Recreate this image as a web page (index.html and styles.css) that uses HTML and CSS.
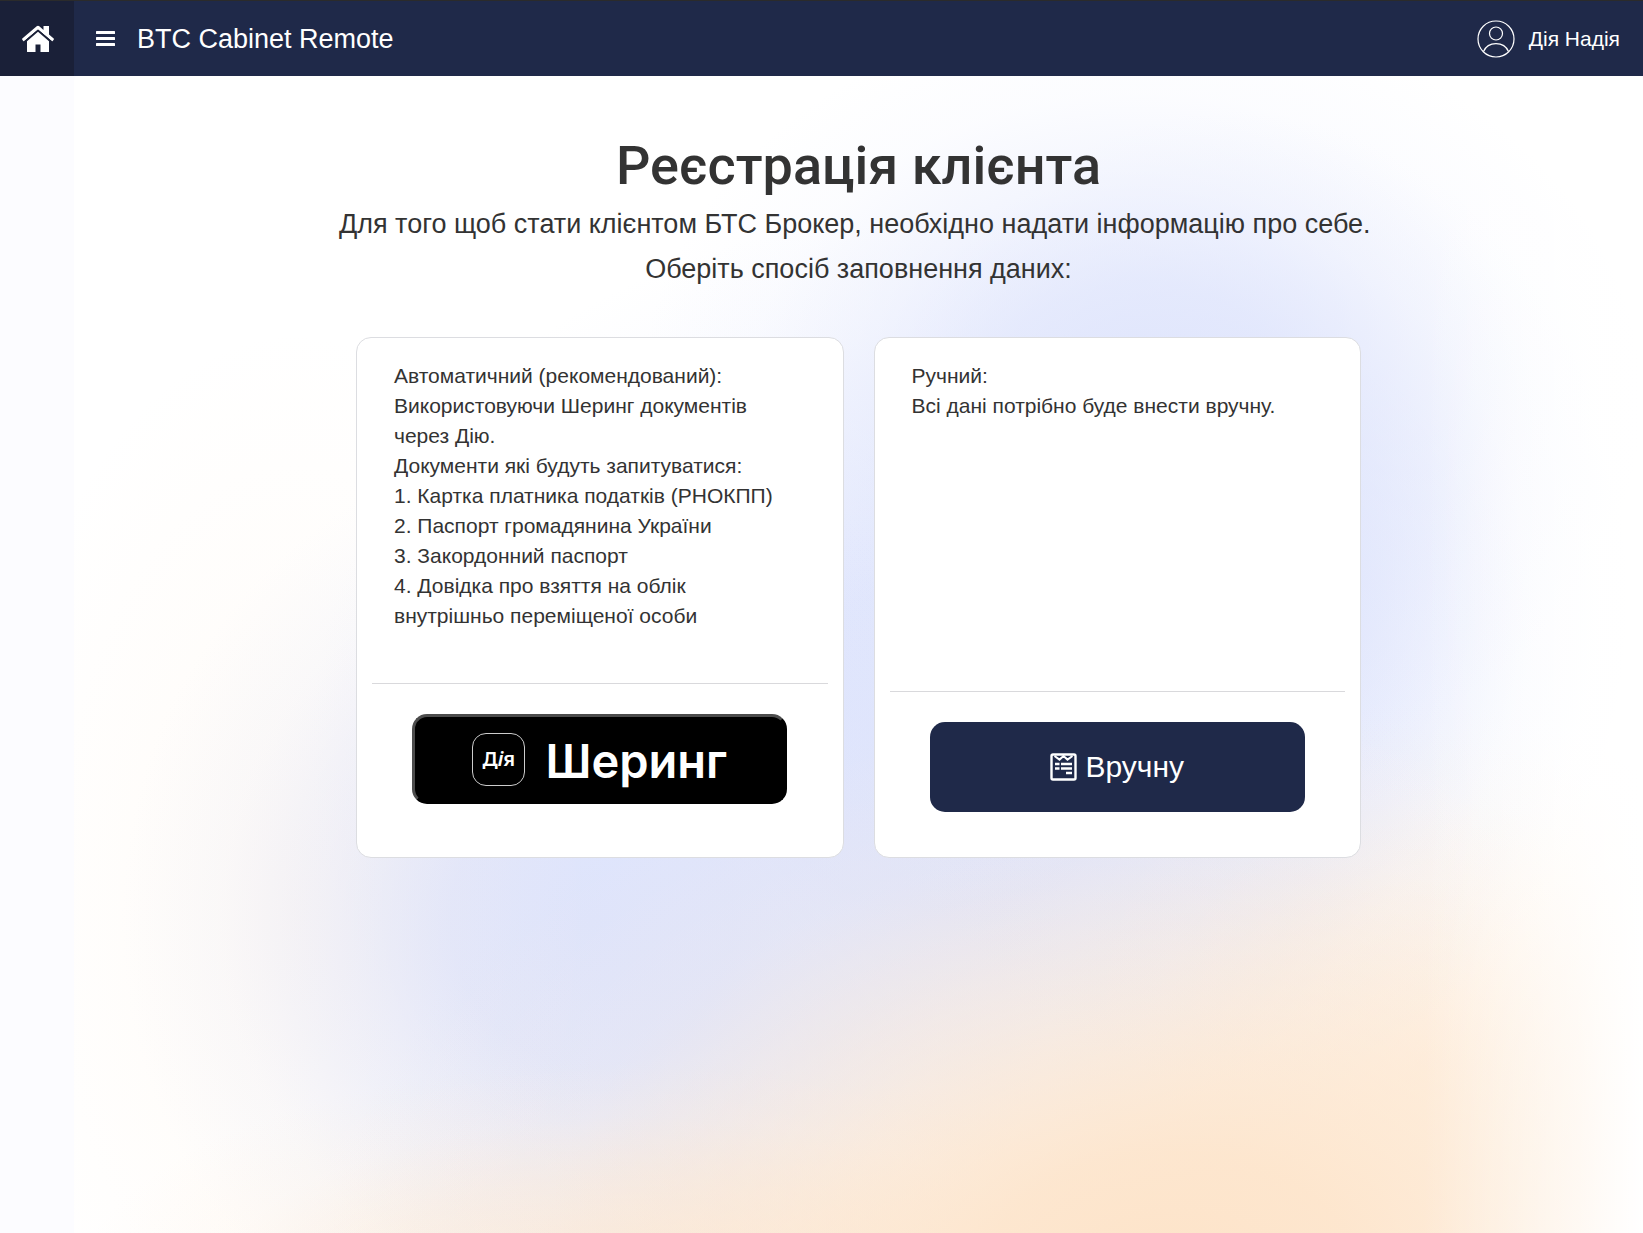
FILE: index.html
```html
<!DOCTYPE html>
<html lang="uk">
<head>
<meta charset="utf-8">
<meta name="viewport" content="width=device-width, initial-scale=1">
<title>BTC Cabinet Remote</title>
<link rel="stylesheet" href="styles.css">
</head>
<body>
<header class="topbar">
  <a class="home" href="#" aria-label="Home">
    <svg width="34" height="28" viewBox="0 0 34 28" fill="#fff"><path d="M17 6.800 L28 16.200 V26.500 Q28 27 27.500 27 H19.500 V19.500 H14.500 V27 H6.500 Q6 27 6 26.500 V16.200 Z"/><path d="M15.700 1.300 Q17 .300 18.300 1.300 L22.500 4.900 V1 H28 V9.600 L32.700 13.600 Q33.200 14.100 32.700 14.700 L31.700 15.900 Q31.200 16.400 30.700 16 L17 4.400 L3.300 16 Q2.800 16.400 2.300 15.900 L1.300 14.700 Q.800 14.100 1.300 13.600 Z"/><path d="M2.800 16.900 L17 5 L31.200 16.900" fill="none" stroke="#1a2038" stroke-width="1"/></svg>
  </a>
  <button class="menu" type="button" aria-label="Menu">
    <svg width="19" height="16" viewBox="0 0 19 16" fill="#fff"><rect width="19" height="3" rx=".5"/><rect y="6" width="19" height="3" rx=".5"/><rect y="12" width="19" height="3" rx=".5"/></svg>
  </button>
  <span class="brand">BTC Cabinet Remote</span>
  <a class="user" href="#">
    <svg width="38" height="38" viewBox="0 0 38 38" fill="none" stroke="#fff" stroke-width="1.200"><circle cx="19" cy="19" r="18"/><circle cx="19" cy="13.500" r="6.500"/><path d="M6.500 31.500 C11 21 27 21 31.500 31.500"/></svg>
    <span>Дія Надія</span>
  </a>
</header>
<div class="shell">
  <nav class="sidebar" aria-label="Sections"></nav>
  <main class="content">
    <h1 class="title">Реєстрація клієнта</h1>
    <p class="lead">Для того щоб стати клієнтом БТС Брокер, необхідно надати інформацію про себе.&nbsp;</p>
    <p class="lead">Оберіть спосіб заповнення даних:</p>
    <div class="cards">
      <section class="card">
        <div class="info">
          <p>Автоматичний (рекомендований):</p>
          <p>Використовуючи Шеринг документів через Дію.</p>
          <p>Документи які будуть запитуватися:</p>
          <p>1. Картка платника податків (РНОКПП)</p>
          <p>2. Паспорт громадянина України</p>
          <p>3. Закордонний паспорт</p>
          <p>4. Довідка про взяття на облік внутрішньо переміщеної особи</p>
        </div>
        <div class="action">
          <button class="btn btn-diia" type="button">
            <span class="diia-mark"><span>Д<i>і</i>я</span></span>
            <span class="diia-name">Шеринг</span>
          </button>
        </div>
      </section>
      <section class="card">
        <div class="info info-tall">
          <p>Ручний:</p>
          <p>Всі дані потрібно буде внести вручну.</p>
        </div>
        <div class="action">
          <button class="btn btn-manual" type="button">
            <svg width="27" height="28" viewBox="0 0 27 28" fill="none" stroke="#fff" stroke-width="2"><rect x="1.500" y="1.500" width="24" height="25" rx="1.500" stroke-width="2.400"/><path d="M4.500 3 L9.500 6.600 L13.500 3 L17.500 6.600 L22.500 3"/><path d="M5 11 H9.500 M11 11 H22 M5 15.500 H9.500 M11 15.500 H22 M16 20 H22" stroke-width="2.400"/></svg>
            <span>Вручну</span>
          </button>
        </div>
      </section>
    </div>
  </main>
</div>
</body>
</html>
```
FILE: styles.css
```css
* { box-sizing: border-box; }

body {
  margin: 0;
  min-height: 100vh;
  display: flex;
  flex-direction: column;
  font-family: "Liberation Sans", Arial, sans-serif;
  font-size: 21px;
  line-height: 30px;
  color: #333;
  background: #fcfcff;
}

h1, p { margin: 0; }

button { font: inherit; cursor: pointer; }

.topbar {
  display: flex;
  align-items: center;
  height: 76px;
  border-top: 1px solid #2b2b2b;
  background: #1f2949;
  color: #fff;
}

.home {
  display: flex;
  align-items: center;
  justify-content: center;
  align-self: stretch;
  width: 74px;
  padding-left: 2px;
  background: #1a2038;
}

.menu {
  display: flex;
  margin-left: 22px;
  padding: 0;
  border: 0;
  background: none;
}

.brand {
  margin-left: 22px;
  font-size: 27px;
}

.user {
  display: flex;
  align-items: center;
  gap: 14px;
  margin-left: auto;
  padding-right: 23px;
  color: #fff;
  text-decoration: none;
}

.shell {
  flex: 1;
  display: flex;
}

.sidebar { width: 74px; }

.content {
  --blue: 222, 228, 252;
  --peach: 253, 227, 200;
  flex: 1;
  padding: 55px 15px;
  border-radius: 4px 4px 0 0;
  text-align: center;
  background:
    linear-gradient(to left, #fff 0%, rgba(255, 255, 255, .6) 4%, rgba(255, 255, 255, 0) 14%),
    radial-gradient(ellipse 54% 50% at 70% 104%, rgba(var(--peach), 1) 0%, rgba(var(--peach), .86) 22%, rgba(var(--peach), .46) 48%, rgba(var(--peach), .12) 75%, rgba(var(--peach), 0) 100%),
    radial-gradient(ellipse 24% 32% at 86% 86%, rgba(var(--peach), .4) 0%, rgba(var(--peach), .2) 50%, rgba(var(--peach), .05) 75%, rgba(var(--peach), 0) 100%),
    radial-gradient(ellipse 36% 20% at 36% 105%, rgba(var(--peach), .7) 0%, rgba(var(--peach), .35) 50%, rgba(var(--peach), .1) 75%, rgba(var(--peach), 0) 100%),
    radial-gradient(ellipse 20% 50% at 14% 72%, rgba(var(--peach), .16) 0%, rgba(var(--peach), .08) 50%, rgba(var(--peach), 0) 100%),
    radial-gradient(ellipse 30% 42% at 33% 73%, rgba(var(--blue), 1) 0%, rgba(var(--blue), .88) 30%, rgba(var(--blue), .5) 55%, rgba(var(--blue), .16) 78%, rgba(var(--blue), 0) 100%),
    radial-gradient(ellipse 32% 34% at 68% 28%, rgba(var(--blue), .9) 0%, rgba(var(--blue), .72) 30%, rgba(var(--blue), .36) 55%, rgba(var(--blue), .1) 78%, rgba(var(--blue), 0) 100%),
    radial-gradient(ellipse 25% 42% at 74% 45%, rgba(var(--blue), 1) 0%, rgba(var(--blue), .86) 25%, rgba(var(--blue), .48) 50%, rgba(var(--blue), .14) 75%, rgba(var(--blue), 0) 100%),
    radial-gradient(ellipse 40% 46% at 55% 58%, rgba(var(--blue), 1) 0%, rgba(var(--blue), .9) 30%, rgba(var(--blue), .5) 55%, rgba(var(--blue), .14) 78%, rgba(var(--blue), 0) 100%),
    #fff;
}

.title {
  font: 500 54px/70px Roboto, sans-serif;
}

.lead {
  font-size: 27px;
  line-height: 45px;
}

.title + .lead { margin-top: 1px; }

.cards {
  display: grid;
  grid-template-columns: 1fr 1fr;
  gap: 30px;
  max-width: 1005px;
  margin: 45px auto 0;
}

.card {
  padding: 0 15px 15px;
  border: 1px solid #dcdde1;
  border-radius: 15px;
  background: #fff;
  text-align: left;
}

.info {
  min-height: 346px;
  padding: 23px 30px 23px 22px;
  border-bottom: 1px solid #d9d9dc;
}

.info-tall { min-height: 354px; }

.action {
  display: flex;
  justify-content: center;
  padding: 30px 0;
}

.btn {
  display: flex;
  align-items: center;
  justify-content: center;
  width: 375px;
  height: 90px;
  border-radius: 15px;
  color: #fff;
}

.btn-diia {
  gap: 20px;
  border: 3px outset #000;
  border-color: #4c4c4c #000 #000 #4c4c4c;
  background: #000;
}

.diia-name {
  padding-top: 4px;
  font: 600 47px/54px Inter, sans-serif;
}

.diia-mark {
  display: flex;
  align-items: center;
  justify-content: center;
  width: 53px;
  height: 53px;
  border: 1px solid #ccc;
  border-radius: 14px;
  font: 600 20px/24px "Noto Sans", sans-serif;
}

.btn-manual {
  gap: 8px;
  border: 0;
  background: #1f2949;
  font-size: 30px;
}
```
